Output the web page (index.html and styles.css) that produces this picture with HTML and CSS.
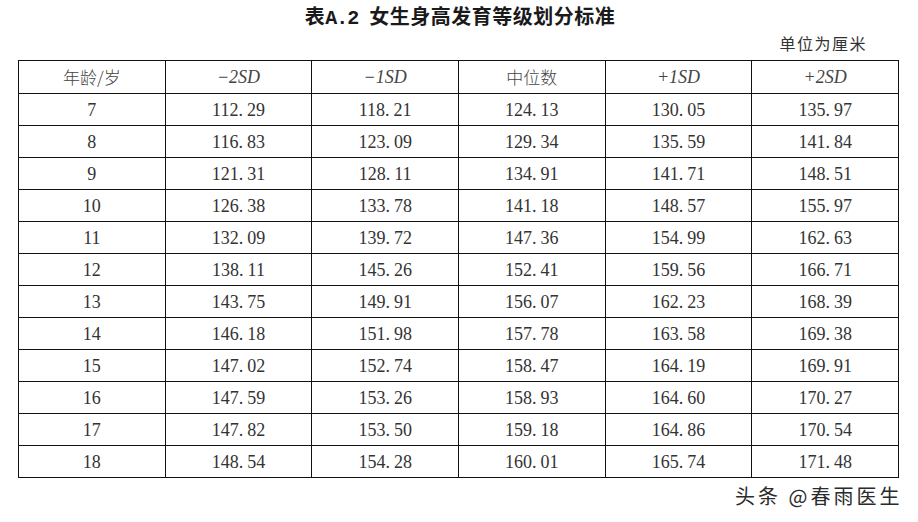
FILE: index.html
```html
<!DOCTYPE html>
<html lang="zh">
<head>
<meta charset="utf-8">
<title>表A.2 女生身高发育等级划分标准</title>
<link rel="stylesheet" href="styles.css">
</head>
<body>
<div class="page">
  <h1 class="title">表<span class="code">A.2</span> 女生身高发育等级划分标准</h1>
  <div class="unit">单位为厘米</div>
  <table class="grid">
    <thead>
      <tr>
        <th class="cjk">年龄/岁</th>
        <th><i>−2SD</i></th>
        <th><i>−1SD</i></th>
        <th class="cjk">中位数</th>
        <th><i>+1SD</i></th>
        <th><i>+2SD</i></th>
      </tr>
    </thead>
    <tbody id="rows"></tbody>
  </table>
  <div class="mark">头条 @春雨医生</div>
</div>
<script src="app.js"></script>
</body>
</html>
```

FILE: app.js
```js
const data = [
  [7, "112.29", "118.21", "124.13", "130.05", "135.97"],
  [8, "116.83", "123.09", "129.34", "135.59", "141.84"],
  [9, "121.31", "128.11", "134.91", "141.71", "148.51"],
  [10, "126.38", "133.78", "141.18", "148.57", "155.97"],
  [11, "132.09", "139.72", "147.36", "154.99", "162.63"],
  [12, "138.11", "145.26", "152.41", "159.56", "166.71"],
  [13, "143.75", "149.91", "156.07", "162.23", "168.39"],
  [14, "146.18", "151.98", "157.78", "163.58", "169.38"],
  [15, "147.02", "152.74", "158.47", "164.19", "169.91"],
  [16, "147.59", "153.26", "158.93", "164.60", "170.27"],
  [17, "147.82", "153.50", "159.18", "164.86", "170.54"],
  [18, "148.54", "154.28", "160.01", "165.74", "171.48"]
];
const tbody = document.getElementById("rows");
for (const row of data) {
  const tr = document.createElement("tr");
  row.forEach((v, i) => {
    const td = document.createElement("td");
    if (i === 0) {
      td.textContent = v;
    } else {
      const [a, b] = v.split(".");
      td.append(a);
      const dot = document.createElement("span");
      dot.className = "dot";
      dot.textContent = ".";
      td.append(dot, b);
    }
    tr.appendChild(td);
  });
  tbody.appendChild(tr);
}
```

FILE: styles.css
```css
html, body {
  margin: 0;
  padding: 0;
  background: #fff;
}
.page {
  width: 918px;
  height: 522px;
  position: relative;
  display: flex;
  flex-direction: column;
  font-family: "Liberation Serif", "Noto Sans CJK SC", serif;
  color: #333;
}
.title {
  margin: 0;
  height: 31px;
  line-height: 31px;
  text-align: center;
  font-family: "Noto Sans CJK SC", sans-serif;
  font-weight: bold;
  font-size: 20px;
  color: #1a1a1a;
  letter-spacing: 0.5px;
  padding-left: 2px;
}
.title .code {
  font-family: "Liberation Mono", "DejaVu Sans Mono", monospace;
  font-weight: bold;
  letter-spacing: -1px;
  margin-right: 6px;
}
.unit {
  height: 27px;
  line-height: 25px;
  text-align: right;
  padding-right: 51px;
  font-family: "Noto Sans CJK SC", sans-serif;
  font-size: 16px;
  letter-spacing: 1.5px;
  color: #333;
}
.grid {
  margin-left: 18px;
  margin-top: 2px;
  width: 881px;
  border-collapse: collapse;
  table-layout: fixed;
}
.grid th, .grid td {
  border: 1px solid #111;
  height: 31px;
  padding: 0;
  text-align: center;
  font-weight: normal;
  font-size: 18px;
  line-height: 20px;
  color: #333;
}
.grid th {
  height: 32px;
}
.grid th i {
  font-style: italic;
  color: #444;
}
.grid th.cjk {
  font-family: "Noto Sans CJK SC", sans-serif;
  font-size: 17px;
  font-weight: 300;
  color: #444;
}
.dot {
  padding-right: 4px;
}
.mark {
  position: absolute;
  left: 735px;
  top: 481px;
  font-family: "Noto Sans CJK SC", sans-serif;
  font-size: 20px;
  letter-spacing: 3px;
  color: #2b2b2b;
  text-shadow: 0 0 1px #fff;
}
```
